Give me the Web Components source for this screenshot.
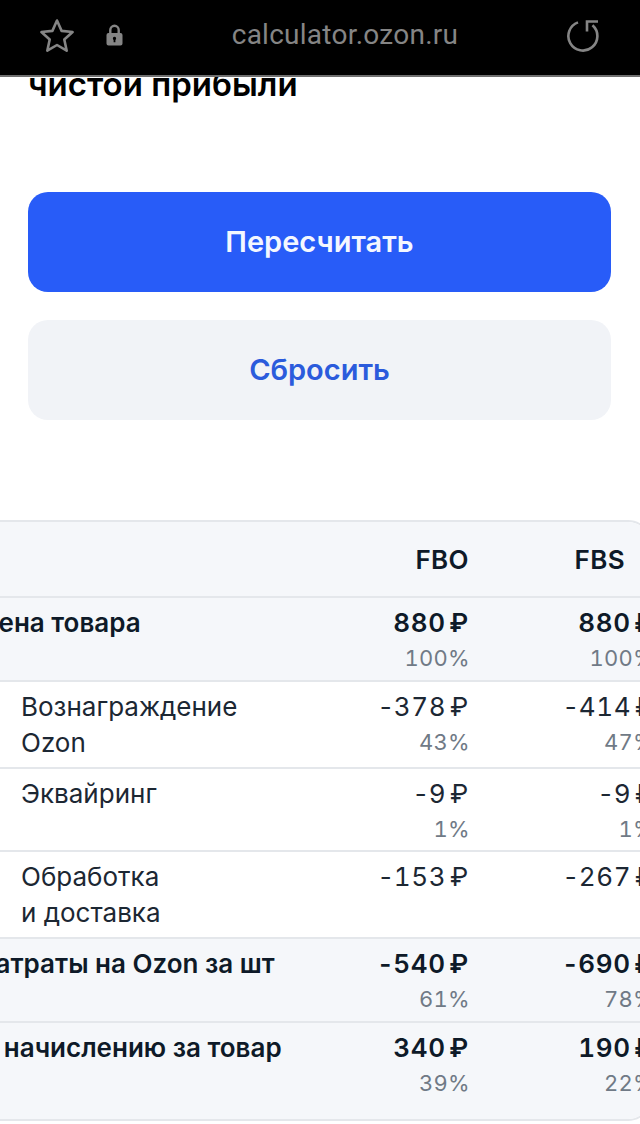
<!DOCTYPE html>
<html lang="ru">
<head>
<meta charset="utf-8">
<title>calculator.ozon.ru</title>
<style>
  html, body { margin: 0; padding: 0; background: #fff; }
  body { width: 640px; height: 1124px; overflow: hidden; font-family: Inter, "Liberation Sans", sans-serif; }
  .actions { display: flex; flex-direction: column; gap: 28px; padding: 0 29px 0 28px; margin-top: 88px; }
</style>
</head>
<body>
<browser-bar url="calculator.ozon.ru"></browser-bar>
<page-heading>чистой прибыли</page-heading>
<div class="actions">
  <app-button kind="primary">Пересчитать</app-button>
  <app-button kind="secondary">Сбросить</app-button>
</div>
<calc-table>
  <calc-row tone="head" fbo="FBO" fbs="FBS"></calc-row>
  <calc-row tone="total" fbo="880 ₽" fbs="880 ₽" fbo-pct="100%" fbs-pct="100%">Цена товара</calc-row>
  <calc-row fbo="-378 ₽" fbs="-414 ₽" fbo-pct="43%" fbs-pct="47%">Вознаграждение Ozon</calc-row>
  <calc-row fbo="-9 ₽" fbs="-9 ₽" fbo-pct="1%" fbs-pct="1%">Эквайринг</calc-row>
  <calc-row fbo="-153 ₽" fbs="-267 ₽">Обработка<br>и доставка</calc-row>
  <calc-row tone="total" fbo="-540 ₽" fbs="-690 ₽" fbo-pct="61%" fbs-pct="78%">Затраты на Ozon за шт</calc-row>
  <calc-row tone="total" last fbo="340 ₽" fbs="190 ₽" fbo-pct="39%" fbs-pct="22%">К начислению за товар</calc-row>
</calc-table>

<script>
class BrowserBar extends HTMLElement {
  connectedCallback() {
    this.attachShadow({ mode: 'open' });
    this.shadowRoot.innerHTML = `
      <style>
        :host {
          display: flex;
          align-items: center;
          position: relative;
          z-index: 2;
          height: 70px;
          padding-bottom: 5px;
          background: #000;
          border-bottom: 2px solid #6f6f6f;
          margin-bottom: -1px;
          color: #858585;
        }
        .left { display: flex; align-items: center; gap: 31px; padding-left: 39px; width: 193px; box-sizing: border-box; }
        .url { flex: 1; text-align: center; font: 400 28px/1 Roboto, sans-serif; letter-spacing: .25px; padding-right: 70px; }
        .right { padding-right: 40px; display: flex; }
        svg { display: block; }
      </style>
      <div class="left">
        <svg width="36" height="35" viewBox="0 0 36 35" fill="none" stroke="currentColor" stroke-width="2.6" stroke-linejoin="round">
          <path d="M18 2.500l4.600 10.400 11 1.100-8.300 7.500 2.400 11.200L18 27l-9.700 5.700 2.400-11.200L2.400 14l11-1.100z"/>
        </svg>
        <svg width="17" height="22" viewBox="0 0 17 22">
          <path fill="none" stroke="currentColor" stroke-width="2.400" d="M4.300 10V6a4.200 4.200 0 0 1 8.400 0V10"/>
          <path fill="currentColor" fill-rule="evenodd" d="M2.500 9h12A2 2 0 0 1 16.500 11v8.500a2 2 0 0 1-2 2h-12a2 2 0 0 1-2-2V11a2 2 0 0 1 2-2zM8.500 12.800a1.700 1.700 0 0 0-.9 3.100v2.400h1.800v-2.400a1.700 1.700 0 0 0-.9-3.100z"/>
        </svg>
      </div>
      <div class="url">${this.getAttribute('url')}</div>
      <div class="right">
        <svg width="33" height="33" viewBox="0 0 33 33" fill="none" stroke="currentColor" stroke-width="2.600">
          <path d="M25.500 6.200A14.500 14.500 0 1 1 11 3.400"/>
          <path d="M31 2.500H20V12.500"/>
        </svg>
      </div>
    `;
  }
}

class PageHeading extends HTMLElement {
  connectedCallback() {
    this.attachShadow({ mode: 'open' });
    this.shadowRoot.innerHTML = `
      <style>
        :host {
          display: block;
          margin-top: -13px;
          padding-left: 28px;
          font: 600 33px/40px Inter, sans-serif;
          color: #000;
          height: 40px;
        }
      </style>
      <slot></slot>
    `;
  }
}

class AppButton extends HTMLElement {
  connectedCallback() {
    this.attachShadow({ mode: 'open' });
    const secondary = this.getAttribute('kind') === 'secondary';
    this.shadowRoot.innerHTML = `
      <style>
        :host {
          display: flex;
          align-items: center;
          justify-content: center;
          height: 100px;
          border-radius: 20px;
          font: 600 29px/36px Inter, sans-serif;
          background: ${secondary ? '#f1f3f7' : '#285cf8'};
          color: ${secondary ? '#2b5bdc' : '#f4f7ff'};
        }
      </style>
      <slot></slot>
    `;
  }
}

class CalcTable extends HTMLElement {
  connectedCallback() {
    this.attachShadow({ mode: 'open' });
    this.shadowRoot.innerHTML = `
      <style>
        :host {
          display: block;
          box-sizing: border-box;
          width: 687px;
          margin: 100px 0 0 -35px;
          border: 2px solid #e4e7eb;
          border-radius: 24px;
          overflow: hidden;
          background: #fff;
        }
      </style>
      <slot></slot>
    `;
  }
}

class CalcRow extends HTMLElement {
  connectedCallback() {
    this.attachShadow({ mode: 'open' });
    const cell = (name) => {
      const value = (this.getAttribute(name) || '').replace(/^-/, '<span class="minus">-</span>');
      const pct = this.getAttribute(name + '-pct');
      return `<div class="cell ${name}"><div class="val">${value}</div>${pct ? `<div class="pct">${pct}</div>` : ''}</div>`;
    };
    this.shadowRoot.innerHTML = `
      <style>
        :host {
          display: grid;
          grid-template-columns: 304px 185px 185px;
          padding-left: 12px;
          box-sizing: border-box;
          width: 700px;
          font: 400 26px/36px Inter, sans-serif;
          color: #1c2733;
          background: #fff;
          border-bottom: 2px solid #e4e7eb;
        }
        :host([tone]) { background: #f5f7fa; }
        :host([last]) { border-bottom: 0; padding-bottom: 15px; }
        :host([tone="total"]) { font-weight: 600; color: #0e1a28; }
        :host([tone="head"]) { height: 76px; font-weight: 600; color: #0e1a28; }
        :host([tone="head"]) .label, :host([tone="head"]) .cell { padding: 20px 0 0; }
        :host([tone="head"]) .fbs { padding-right: 29px; }
        .label { padding: 7px 14px 6px 42px; }
        :host([tone]) .label { padding-left: 0; white-space: nowrap; }
        .cell { padding: 7px 0 6px; text-align: right; font-variant-numeric: tabular-nums; }
        .val { letter-spacing: .7px; word-spacing: -4px; margin-right: -1px; }
        .minus { display: inline-block; width: 14px; text-align: left; font-variant-numeric: normal; letter-spacing: 0; }
        :host([tone="head"]) .val { letter-spacing: .4px; margin-right: -1px; }
        .pct { font-weight: 400; font-size: 22px; line-height: 32.5px; color: #707a86; letter-spacing: .3px; padding-top: 1px; margin: 0 -2px -1px 0; }
      </style>
      <div class="label"><slot></slot></div>
      ${cell('fbo')}
      ${cell('fbs')}
    `;
  }
}

customElements.define('browser-bar', BrowserBar);
customElements.define('page-heading', PageHeading);
customElements.define('app-button', AppButton);
customElements.define('calc-table', CalcTable);
customElements.define('calc-row', CalcRow);
</script>
</body>
</html>
